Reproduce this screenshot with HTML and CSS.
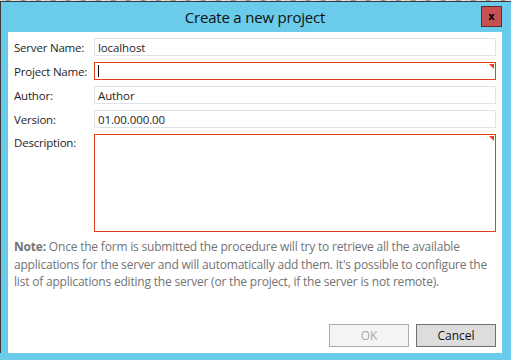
FILE: index.html
```html
<!DOCTYPE html>
<html>
<head>
<meta charset="utf-8">
<link rel="stylesheet" href="styles.css">
</head>
<body>
<div class="behind"></div>
<div class="window">
  <div class="titlebar">
    <div class="title">Create a new project</div>
    <div class="close">x</div>
  </div>
  <div class="content">
    <div class="form">
      <div class="label">Server Name:</div>
      <div class="input">localhost</div>
      <div class="label">Project Name:</div>
      <div class="input error"><span class="caret"></span></div>
      <div class="label">Author:</div>
      <div class="input">Author</div>
      <div class="label">Version:</div>
      <div class="input">01.00.000.00</div>
      <div class="label top">Description:</div>
      <div class="input error area"></div>
    </div>
    <p class="note"><b>Note:</b> Once the form is submitted the procedure will try to retrieve all the available<br>applications for the server and will automatically add them. It's possible to configure the<br>list of applications editing the server (or the project, if the server is not remote).</p>
    <div class="buttons">
      <div class="btn disabled">OK</div>
      <div class="btn">Cancel</div>
    </div>
  </div>
</div>
</body>
</html>
```
FILE: styles.css
```css
html, body {
  margin: 0;
  padding: 0;
  width: 511px;
  height: 360px;
  overflow: hidden;
  background: #6bcbeb;
  font-family: "Open Sans", "Noto Sans", sans-serif;
}
.behind {
  height: 1px;
  background: repeating-linear-gradient(90deg, #d8d8d8 0 6px, #8a96a8 6px 9px, #c9a27a 9px 11px, #e6e6e6 11px 15px);
}
.window {
  border-top: 1px solid #3a3a3a;
  border-left: 1px solid #3a3a3a;
  background: #6bcbeb;
  padding: 0 9px 0 7px;
}
.titlebar {
  height: 30px;
  display: flex;
  align-items: center;
  justify-content: center;
  position: relative;
}
.title {
  font-size: 15px;
  color: #111;
  letter-spacing: -0.2px;
  margin-top: -1px;
}
.close {
  position: absolute;
  right: 0;
  top: 4px;
  width: 19px;
  height: 19px;
  background: #c75050;
  border: 1px solid #5c3030;
  color: #000;
  font-family: "DejaVu Sans", sans-serif;
  font-weight: bold;
  font-size: 10px;
  display: flex;
  align-items: center;
  justify-content: center;
  line-height: 1;
}
.content {
  background: #fff;
  height: 321px;
  padding: 6px 6px 0 6px;
  box-sizing: border-box;
  display: flex;
  flex-direction: column;
}
.form {
  display: grid;
  grid-template-columns: 80px 1fr;
  grid-template-rows: 18px 18px 18px 18px 98px;
  row-gap: 6px;
}
.label {
  font-size: 11.5px;
  color: #1e1e1e;
  display: flex;
  align-items: center;
  letter-spacing: -0.2px;
}
.label.top {
  align-items: flex-start;
  padding-top: 1px;
}
.input {
  border: 1px solid #e1e1e8;
  box-sizing: border-box;
  font-size: 11.5px;
  color: #1e1e1e;
  padding-left: 3px;
  display: flex;
  align-items: center;
  position: relative;
  letter-spacing: -0.1px;
}
.input.error {
  border-color: #e0401a;
}
.input.error::after {
  content: "";
  position: absolute;
  top: 1px;
  right: 1px;
  border-top: 5px solid #e0401a;
  border-left: 5px solid transparent;
}
.caret {
  width: 0;
  height: 12px;
  border-left: 1px solid #000;
}
.note {
  margin: 6px 0 0 0;
  font-size: 12px;
  line-height: 17.5px;
  color: #737373;
  letter-spacing: -0.2px;
}
.note b {
  font-weight: bold;
}
.buttons {
  display: flex;
  justify-content: flex-end;
  gap: 7px;
  margin-top: auto;
  margin-bottom: 6px;
}
.btn {
  width: 80px;
  height: 23px;
  box-sizing: border-box;
  border: 1px solid #707070;
  background: #dddddd;
  font-size: 12px;
  color: #111;
  display: flex;
  align-items: center;
  justify-content: center;
}
.btn.disabled {
  border-color: #adadad;
  background: #f4f4f4;
  color: #a8a8a8;
}
```
